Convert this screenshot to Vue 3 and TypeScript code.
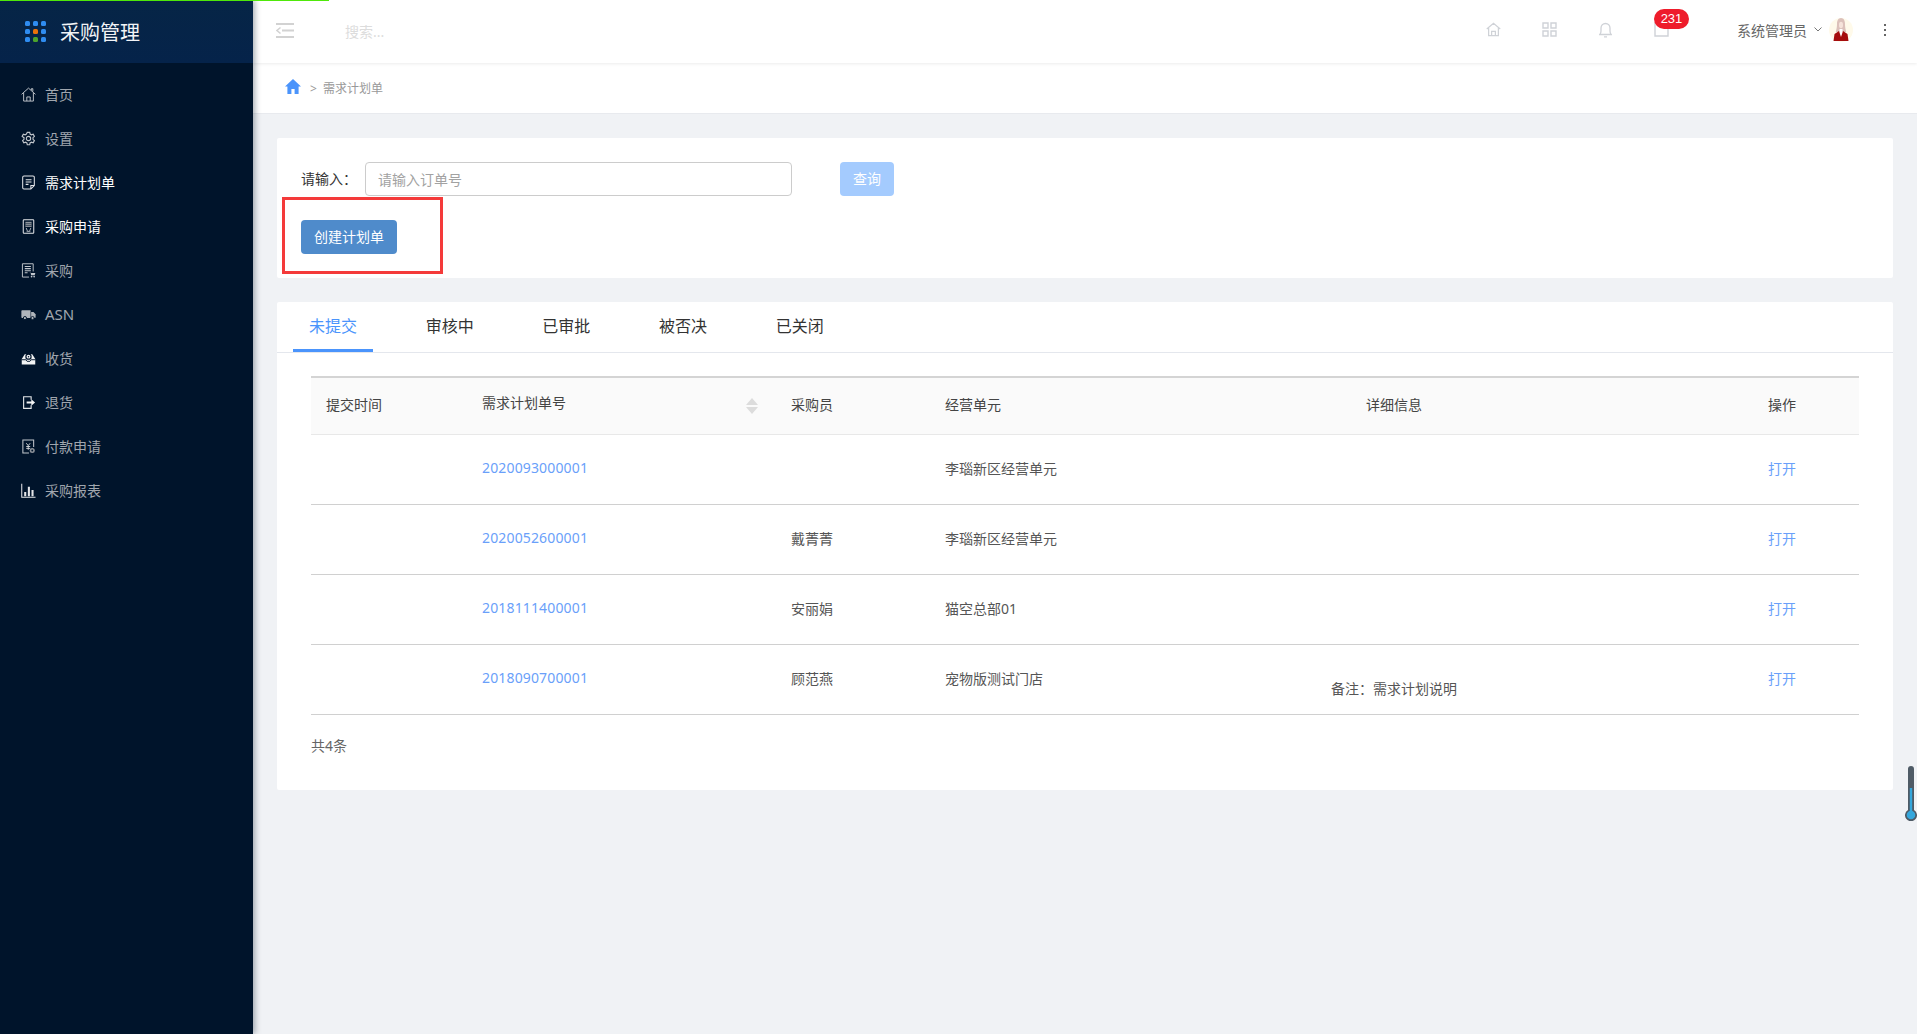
<script setup lang="ts">
interface Row {
  no: string
  buyer: string
  unit: string
  note: string
}

const menu = [
  { key: 'home', label: '首页', active: false },
  { key: 'gear', label: '设置', active: false },
  { key: 'doc', label: '需求计划单', active: true },
  { key: 'apply', label: '采购申请', active: true },
  { key: 'buy', label: '采购', active: false },
  { key: 'truck', label: 'ASN', active: false },
  { key: 'inbox', label: '收货', active: false },
  { key: 'out', label: '退货', active: false },
  { key: 'pay', label: '付款申请', active: false },
  { key: 'chart', label: '采购报表', active: false }
]

const tabs = ['未提交', '审核中', '已审批', '被否决', '已关闭']

const rows: Row[] = [
  { no: '2020093000001', buyer: '', unit: '李瑙新区经营单元', note: '' },
  { no: '2020052600001', buyer: '戴菁菁', unit: '李瑙新区经营单元', note: '' },
  { no: '2018111400001', buyer: '安丽娟', unit: '猫空总部01', note: '' },
  { no: '2018090700001', buyer: '顾范燕', unit: '宠物版测试门店', note: '备注：需求计划说明' }
]

const dots = ['#2f8cf0', '#2f8cf0', '#2f8cf0', '#2f8cf0', '#e8710a', '#2f8cf0', '#2f8cf0', '#4ca32c', '#2f8cf0']
</script>

<template>
  <div class="page">
    <div class="progress"></div>

    <aside class="side">
      <div class="brand">
        <div class="dots">
          <i v-for="(c, i) in dots" :key="i" :style="{ background: c }"></i>
        </div>
        <span class="brand-name">采购管理</span>
      </div>
      <nav class="menu">
        <a v-for="m in menu" :key="m.key" class="item" :class="{ on: m.active }">
          <svg class="mi" viewBox="0 0 16 16" fill="none" stroke="#c2c7cd" stroke-width="1">
            <template v-if="m.key === 'home'">
              <path d="M.6 7.800 8 1.200l7.400 6.600M2.800 6.400v8.600h10.400V6.400M6.200 15v-4.400h3.600V15M11 3.400V1.800h1.600v3" />
            </template>
            <template v-else-if="m.key === 'gear'">
              <path d="M6.700 1.400h2.600l.4 1.900 1.400.8 1.900-.6 1.300 2.300-1.500 1.300v1.800l1.500 1.300-1.300 2.300-1.900-.6-1.400.8-.4 1.900H6.700l-.4-1.900-1.400-.8-1.900.6-1.300-2.300 1.500-1.300V7.100L1.200 5.800l1.300-2.300 1.900.6 1.400-.8z" stroke-width="1.200" />
              <circle cx="8" cy="8" r="2.300" stroke-width="1.200" />
            </template>
            <template v-else-if="m.key === 'doc'">
              <path d="M10.500 15H3.200A1.400 1.400 0 0 1 1.800 13.600V2.400A1.400 1.400 0 0 1 3.200 1h9.600a1.400 1.400 0 0 1 1.400 1.400V11.300zM10.500 15v-3.700h3.700M5 5h6.200M5 7.500h6.200M5 10h3" stroke="#e4e6e9" stroke-width="1.100" />
            </template>
            <template v-else-if="m.key === 'apply'">
              <path d="M3.200 .8h9.600a.8.8 0 0 1 .8.8v12.800a.8.8 0 0 1-.8.8H3.200a.8.8 0 0 1-.8-.8V1.600a.8.8 0 0 1 .8-.8z" stroke="#e4e6e9" stroke-width="1.100" />
              <path d="M4.700 3h6.600v5.500H4.700z" fill="#8f969e" stroke="none" />
              <path d="M4.700 5h6.600M4.700 7h6.600" stroke="#00142b" stroke-width=".6" />
              <path d="M5.500 9.500 7 13.200h2l1.500-3.700M6 13.500h1M9 13.500h1" stroke="#b4bac2" />
            </template>
            <template v-else-if="m.key === 'buy'">
              <path d="M8.500 15H1.500V.8h11.500v8.200" />
              <path d="M4 3.800h6.500M4 6h6.500M4 8.200h6.500M4 10.500h3" stroke-width="1.100" />
              <path d="M9 10.200h1.200l.6 2.800h3.700l.8-2.400h-4.900z" fill="#c2c7cd" stroke="none" />
              <circle cx="11.300" cy="14.500" r=".9" fill="#c2c7cd" stroke="none" />
              <circle cx="14" cy="14.500" r=".9" fill="#c2c7cd" stroke="none" />
            </template>
            <template v-else-if="m.key === 'truck'">
              <path d="M1.200 3.500h9v8.200h-9A.8.8 0 0 1 .4 10.900V4.300a.8.8 0 0 1 .8-.8z" fill="#b0b5bb" stroke="none" />
              <path d="M10.800 5.300h2.500l2.300 2.400v3.200a.8.8 0 0 1-.8.8h-4z" fill="#b0b5bb" stroke="none" />
              <circle cx="4.200" cy="11.800" r="1.700" fill="#b0b5bb" stroke="#00142b" />
              <circle cx="12.300" cy="11.800" r="1.700" fill="#b0b5bb" stroke="#00142b" />
            </template>
            <template v-else-if="m.key === 'inbox'">
              <path d="M.8 8.500 4 3.500h8l3.200 5v6H.8z" fill="#f2f3f4" stroke="none" />
              <circle cx="8" cy="6" r="3.400" fill="#00142b" stroke="none" />
              <circle cx="8" cy="6" r="2.100" fill="#f2f3f4" stroke="none" />
              <circle cx="8" cy="6" r=".8" fill="#00142b" stroke="none" />
              <path d="M.5 9.300h4.600L6.500 11h3l1.400-1.700h4.600" stroke="#00142b" stroke-width="1" />
            </template>
            <template v-else-if="m.key === 'out'">
              <path d="M10.800 5V1.800H2.800v12.400h8V11" stroke="#e4e6e9" stroke-width="1.200" />
              <path d="M6 7h5V4.500L15 8l-4 3.500V9H6z" fill="#f2f3f4" stroke="none" />
            </template>
            <template v-else-if="m.key === 'pay'">
              <path d="M8.500 15H2V1h11.500v7.500" stroke-width="1.100" />
              <path d="M5.600 4.500 7.700 7l2.100-2.500M5.600 8h4.200M5.600 10h4.200M7.700 7v4.500" stroke="#d2d5d9" />
              <circle cx="12" cy="12.300" r="2.700" fill="#8a9098" stroke="none" />
              <circle cx="12" cy="12.300" r="1" fill="#00142b" stroke="none" />
            </template>
            <template v-else>
              <path d="M.8 .8v14.400h14.700" stroke="#e4e6e9" stroke-width="1.100" />
              <path d="M3.400 9.500h2.200v4.700H3.400zM7.300 4h2.200v10.200H7.300zM11.200 7.500h2.200v6.700h-2.200z" fill="#e4e6e9" stroke="none" />
            </template>
          </svg>
          <span :class="{ latin: m.key === 'truck' }">{{ m.label }}</span>
        </a>
      </nav>
    </aside>

    <main class="main">
      <header class="top">
        <svg class="collapse" viewBox="0 0 18 15" fill="none" stroke="#d2d2d2" stroke-width="2">
          <path d="M0 1h18M6 7.500h12M0 14h18" />
          <path d="M4.500 4.500 1 7.500l3.500 3" stroke-width="1.500" />
        </svg>
        <span class="search">搜索...</span>
        <div class="top-right">
          <svg class="ti ti-home" viewBox="0 0 16 15" fill="none" stroke="#cfd2d7" stroke-width="1.300">
            <path d="M.8 7 8 1l7.200 6M2.800 5.800V14h10.400V5.800M6 14V9.500h4V14" />
          </svg>
          <svg class="ti ti-grid" viewBox="0 0 15 15" fill="none" stroke="#cfd2d7" stroke-width="1.400">
            <path d="M1 1h5v5H1zM9 1h5v5H9zM1 9h5v5H1zM9 9h5v5H9z" />
          </svg>
          <svg class="ti ti-bell" viewBox="0 0 13 16" fill="none" stroke="#cfd2d7" stroke-width="1.300">
            <path d="M.8 12.500c1-.8 1.200-2 1.200-3.500V6a4.500 4.500 0 0 1 9 0v3c0 1.500.2 2.700 1.200 3.500zM5 14.800h3" />
          </svg>
          <div class="mail">
            <svg class="ti ti-mail" viewBox="0 0 15 15" fill="none" stroke="#cfd2d7" stroke-width="1.400">
              <path d="M1 1h13v13H1z" />
            </svg>
            <span class="badge">231</span>
          </div>
          <span class="user">系统管理员</span>
          <svg class="chev" viewBox="0 0 8 5" fill="none" stroke="#777" stroke-width="1">
            <path d="M.5.5 4 4 7.500.5" />
          </svg>
          <svg class="avatar" viewBox="0 0 24 24">
            <circle cx="12" cy="12" r="12" fill="#fffaea" />
            <path d="M12 0c-2.800 0-4 2.800-4 6 0 3-.6 5.500-1.200 8h10.400c-.6-2.500-1.200-5-1.200-8 0-3.200-1.200-6-4-6z" fill="#dcc1ba" />
            <ellipse cx="12" cy="7" rx="2" ry="3.200" fill="#f6e3da" />
            <path d="M10.500 11h3v5l-1.500 3-1.500-3z" fill="#fff" />
            <path d="M4.500 23 5.500 16l4.500-3 2 6 2-6 4.500 3 1 7z" fill="#a50d0d" />
          </svg>
          <div class="more"><i></i><i></i><i></i></div>
        </div>
      </header>

      <div class="crumb">
        <svg class="crumb-home" viewBox="0 0 16 15">
          <path d="M8 0 0 7.500h2.400V15h4V10h3.200v5h4V7.500H16z" fill="#4b94fb" />
        </svg>
        <span class="sep">&gt;</span>
        <span class="crumb-text">需求计划单</span>
      </div>

      <section class="content">
        <div class="card filter">
          <div class="filter-row">
            <label class="flabel">请输入：</label>
            <div class="finput">请输入订单号</div>
            <button class="btn-query"><span>查询</span></button>
          </div>
          <div class="create-row">
            <button class="btn-create"><span>创建计划单</span></button>
            <div class="mark"></div>
          </div>
        </div>

        <div class="card list">
          <div class="tabs">
            <div v-for="(t, i) in tabs" :key="t" class="tab" :class="{ cur: i === 0 }">{{ t }}</div>
          </div>
          <table class="grid">
            <colgroup>
              <col class="c1" /><col class="c2" /><col class="c3" /><col class="c4" /><col class="c5" /><col class="c6" />
            </colgroup>
            <thead>
              <tr>
                <th>提交时间</th>
                <th>
                  <div class="th-sort">
                    <span class="th-up">需求计划单号</span>
                    <span class="sort"><i class="up"></i><i class="down"></i></span>
                  </div>
                </th>
                <th>采购员</th>
                <th>经营单元</th>
                <th class="mid">详细信息</th>
                <th class="mid">操作</th>
              </tr>
            </thead>
            <tbody>
              <tr v-for="r in rows" :key="r.no">
                <td></td>
                <td class="link num">{{ r.no }}</td>
                <td>{{ r.buyer }}</td>
                <td>{{ r.unit }}</td>
                <td class="mid note"><span v-if="r.note">{{ r.note }}</span></td>
                <td class="mid link">打开</td>
              </tr>
            </tbody>
          </table>
          <div class="total">共4条</div>
        </div>
      </section>
    </main>

    <div class="thermo">
      <svg viewBox="0 0 12 55" width="12" height="55">
        <path d="M3 3a3 3 0 0 1 6 0V44a6 6 0 1 1-6 0z" fill="#4f5b66" />
        <rect x="4.800" y="22" width="2.400" height="26" fill="#35a7dc" />
        <circle cx="6" cy="49" r="4.300" fill="#35a7dc" />
      </svg>
    </div>
  </div>
</template>

<style>
html,
body {
  margin: 0;
  background: #f0f2f5;
}
</style>

<style scoped>
.page {
  position: relative;
  display: flex;
  width: 100%;
  height: 100vh;
  min-height: 1034px;
  overflow: hidden;
  background: #f0f2f5;
  font-family: "Noto Sans", "Noto Sans CJK SC", sans-serif;
  font-size: 14px;
  color: #444;
}

.progress {
  position: absolute;
  left: 0;
  top: 0;
  width: 329px;
  height: 1px;
  background: #4fe80a;
  z-index: 5;
}

.side {
  flex: 0 0 253px;
  background: #00142b;
  box-shadow: 2px 0 6px rgba(0, 21, 41, 0.35);
  z-index: 3;
}

.brand {
  display: flex;
  align-items: center;
  height: 63px;
  padding-left: 25px;
  box-sizing: border-box;
  background: linear-gradient(180deg, #062546, #05234a);
}

.dots {
  display: grid;
  grid-template-columns: repeat(3, 5px);
  grid-auto-rows: 5px;
  gap: 3px;
  width: 21px;
  margin-right: 14px;
}

.dots i {
  display: block;
  border-radius: 1.500px;
}

.brand-name {
  font-size: 20px;
  color: #f2f4f7;
}

.menu {
  padding-top: 9px;
}

.item {
  display: flex;
  align-items: center;
  height: 44px;
  padding-left: 21px;
  color: #a0a6ae;
}

.item.on {
  color: #fff;
}

.latin {
  font-size: 15px;
}

.mi {
  width: 15px;
  height: 15px;
  margin-right: 9px;
}

.main {
  flex: 1;
  display: flex;
  flex-direction: column;
  min-width: 0;
}

.top {
  display: flex;
  align-items: center;
  height: 63px;
  box-sizing: border-box;
  padding-left: 23px;
  background: #fff;
  box-shadow: 0 1px 3px rgba(0, 0, 0, 0.08);
  z-index: 2;
}

.collapse {
  width: 18px;
  height: 15px;
  margin-bottom: 2px;
}

.search {
  margin-left: 51px;
  margin-bottom: 2px;
  color: #dcdcdc;
}

.top-right {
  display: flex;
  align-items: center;
  margin-left: auto;
  margin-bottom: 4px;
}

.ti {
  display: block;
}

.ti-home {
  width: 15px;
  height: 15px;
}

.ti-grid {
  width: 15px;
  height: 15px;
  margin-left: 41px;
}

.ti-bell {
  width: 13px;
  height: 16px;
  margin-left: 42px;
}

.mail {
  position: relative;
  margin-left: 42px;
  margin-right: 68px;
}

.ti-mail {
  width: 15px;
  height: 15px;
}

.badge {
  position: absolute;
  left: 0;
  top: -13px;
  width: 35px;
  height: 20px;
  line-height: 20px;
  border-radius: 10px;
  background: #ee1c2b;
  color: #fff;
  font-family: "Liberation Sans", sans-serif;
  font-size: 13px;
  text-align: center;
}

.user {
  color: #666;
}

.chev {
  width: 8px;
  height: 5px;
  margin-left: 7px;
}

.avatar {
  width: 24px;
  height: 24px;
  margin-left: 7px;
}

.more {
  display: flex;
  flex-direction: column;
  gap: 3px;
  margin: 0 31px 0 31px;
}

.more i {
  display: block;
  width: 2px;
  height: 2px;
  background: #666;
}

.crumb {
  display: flex;
  align-items: center;
  height: 51px;
  padding-left: 32px;
  box-sizing: border-box;
  background: #fff;
  border-bottom: 1px solid #e8eaee;
}

.crumb-home {
  width: 16px;
  height: 15px;
  margin-top: -3px;
}

.sep {
  margin-left: 9px;
  font-size: 12px;
  color: #999;
}

.crumb-text {
  margin-left: 6px;
  font-size: 12px;
  color: #999;
}

.content {
  flex: 1;
  padding: 24px 24px 0;
}

.card {
  background: #fff;
  border-radius: 2px;
}

.filter {
  padding: 24px 24px 24px;
}

.filter-row {
  display: flex;
  align-items: center;
  height: 34px;
}

.flabel {
  width: 64px;
  margin-bottom: 2px;
  color: #333;
}

.finput {
  box-sizing: border-box;
  width: 427px;
  height: 34px;
  line-height: 33px;
  padding-left: 12px;
  border: 1px solid #ccc;
  border-radius: 4px;
  color: #a2a2a2;
}

button {
  border: 0;
  border-radius: 4px;
  padding: 0 0 2px;
  height: 34px;
  color: #fff;
  font: inherit;
}

.btn-query {
  width: 54px;
  margin-left: 48px;
  background: #a4cbfe;
}

.create-row {
  position: relative;
  margin-top: 24px;
  height: 34px;
}

.btn-create {
  display: block;
  width: 96px;
  background: #4f8bcb;
}

.mark {
  position: absolute;
  left: -19px;
  top: -23px;
  width: 161px;
  height: 77px;
  box-sizing: border-box;
  border: 3px solid #f43a3a;
}

.list {
  margin-top: 24px;
  height: 488px;
  padding: 0 34px;
  box-sizing: border-box;
}

.tabs {
  display: flex;
  gap: 36.700px;
  height: 50px;
  margin: 0 -34px;
  padding-left: 16px;
  border-bottom: 1px solid #e4e7ed;
}

.tab {
  box-sizing: border-box;
  width: 80px;
  height: 50px;
  line-height: 48px;
  text-align: center;
  font-size: 16px;
  color: #333;
}

.tab.cur {
  color: #4a94fc;
  border-bottom: 3px solid #4a94fc;
}

.grid {
  width: 100%;
  margin-top: 23px;
  table-layout: fixed;
  border-collapse: collapse;
  border-top: 2px solid #d4d4d4;
}

.c1 { width: 156px; }
.c2 { width: 309px; }
.c3 { width: 154px; }
.c4 { width: 153px; }
.c6 { width: 154px; }

th {
  height: 57px;
  padding: 0 15px 4px;
  box-sizing: border-box;
  background: #fafafa;
  border-bottom: 1px solid #e8e8e8;
  font-weight: 400;
  text-align: left;
  color: #444;
}

td {
  height: 70px;
  padding: 0 15px 3px;
  box-sizing: border-box;
  border-bottom: 1px solid #d0d0d0;
  color: #555;
}

.mid {
  text-align: center;
}

.link {
  color: #6a9ffa;
}

.num {
  letter-spacing: 0.150px;
}

.note span {
  position: relative;
  top: 10px;
}

.th-sort {
  display: flex;
  align-items: center;
  justify-content: space-between;
}

.th-up {
  position: relative;
  top: -2px;
}

.sort {
  display: flex;
  flex-direction: column;
  gap: 2px;
  margin-top: 4px;
  margin-right: 3px;
}

.sort i {
  display: block;
  width: 0;
  height: 0;
  border-left: 6px solid transparent;
  border-right: 6px solid transparent;
}

.sort .up {
  border-bottom: 7px solid #dcdcdc;
}

.sort .down {
  border-top: 7px solid #dcdcdc;
}

.total {
  margin-top: 20px;
  color: #666;
}

.thermo {
  position: absolute;
  right: 0;
  top: 766px;
  width: 12px;
  height: 55px;
  z-index: 4;
}

.thermo svg {
  display: block;
}
</style>
